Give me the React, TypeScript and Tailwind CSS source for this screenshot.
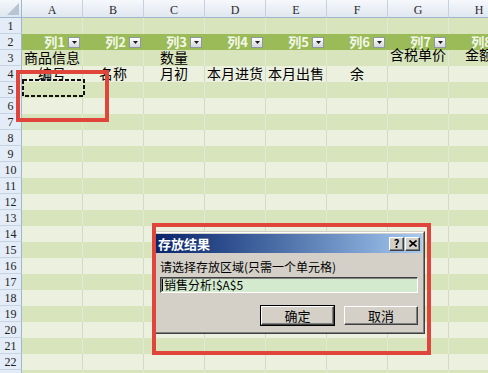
import React from "react";

const COLS = ["A", "B", "C", "D", "E", "F", "G", "H"];
const ROW_COUNT = 23;

const DATA: Record<number, Record<string, { t: string; up?: boolean }>> = {
  3: {
    A: { t: "商品信息" },
    C: { t: "数量" },
    G: { t: "含税单价", up: true },
    H: { t: "金额", up: true },
  },
  4: {
    A: { t: "编号" },
    B: { t: "名称" },
    C: { t: "月初" },
    D: { t: "本月进货" },
    E: { t: "本月出售" },
    F: { t: "余" },
  },
};

function Dropdown() {
  return (
    <span className="flex h-[11px] w-[12px] shrink-0 items-center justify-center border border-[#8f98a0] bg-gradient-to-b from-white to-[#d3d7dc]">
      <svg width="5" height="3" viewBox="0 0 5 3">
        <polygon points="0,0 5,0 2.5,3" fill="#1a1a1a" />
      </svg>
    </span>
  );
}

function TitleBtn({ children }: { children: React.ReactNode }) {
  return (
    <span className="flex h-[14px] w-[15px] items-center justify-center border border-t-white border-l-white border-r-[#404040] border-b-[#404040] bg-[#d4d0c8] shadow-[inset_-1px_-1px_#808080]">
      {children}
    </span>
  );
}

function Row({ r }: { r: number }) {
  const header = r === 2;
  const dark = r % 2 === 1;
  const bg = header ? "bg-[#9bbb59]" : dark ? "bg-[#d8e4bc]" : "bg-[#ebf1de]";
  const line = header
    ? "border-r-[#9bbb59]"
    : dark
    ? "border-r-[#e3ead3]"
    : "border-r-[#d3dbc4]";
  const data = DATA[r] || {};
  return (
    <div className="flex h-[16px]">
      <div className="flex h-[16px] w-[22px] shrink-0 items-center justify-center border-r border-b border-r-[#9eb6ce] border-b-[#c5d3e2] bg-[#e4ecf7] font-['Liberation_Serif',serif] text-[12px] leading-none text-[#222]">
        {r < ROW_COUNT ? r : ""}
      </div>
      {COLS.map((c, i) => {
        const cell = data[c];
        return (
          <div
            key={c}
            className={`flex h-[16px] w-[61px] shrink-0 items-center border-r ${bg} ${line} ${
              header ? "justify-end gap-[3px] pr-[2px]" : "justify-center"
            }`}
          >
            {header ? (
              <>
                <span className="relative z-10 whitespace-nowrap text-[13px] font-bold leading-[16px] text-[#f3f7ea]">
                  列{i + 1}
                </span>
                <Dropdown />
              </>
            ) : cell ? (
              <span
                className={`relative z-10 whitespace-nowrap text-[14px] leading-[16px] text-black ${
                  cell.up ? "-top-[4px]" : "-top-[1px]"
                }`}
              >
                {cell.t}
              </span>
            ) : null}
          </div>
        );
      })}
    </div>
  );
}

export default function App() {
  const rows = Array.from({ length: ROW_COUNT }, (_, i) => i + 1);
  return (
    <div className="relative h-[373px] w-[488px] overflow-hidden bg-white font-['Noto_Sans_CJK_SC',sans-serif]">
      {/* column header */}
      <div className="flex h-[18px]">
        <div className="relative h-[18px] w-[22px] shrink-0 border-r border-b border-r-[#9eb6ce] border-b-[#9eb6ce] bg-gradient-to-b from-[#f4f7fb] to-[#dfe6ef]">
          <svg className="absolute bottom-[2px] right-[2px]" width="12" height="12" viewBox="0 0 12 12">
            <polygon points="12,0 12,12 0,12" fill="#b7c4d3" />
          </svg>
        </div>
        {COLS.map((c) => (
          <div
            key={c}
            className="flex h-[18px] w-[61px] shrink-0 items-center justify-center border-r border-b border-r-[#c5d1de] border-b-[#9eb6ce] bg-gradient-to-b from-[#f6f8fc] to-[#e0e7f0] pt-[2px] font-['Liberation_Serif',serif] text-[12px] leading-none text-[#2a2a2a]"
          >
            {c}
          </div>
        ))}
      </div>
      {rows.map((r) => (
        <Row key={r} r={r} />
      ))}

      {/* copy marquee around A5 */}
      <svg className="absolute left-[22px] top-[79px] z-20" width="63" height="19" viewBox="0 0 63 19">
        <rect x="1" y="1" width="61" height="16" fill="none" stroke="#111" strokeWidth="2" strokeDasharray="4 2" />
      </svg>

      {/* dialog */}
      <div className="absolute left-[153px] top-[231px] z-20 h-[103px] w-[272px] border border-t-[#d4d0c8] border-l-[#d4d0c8] border-r-[#404040] border-b-[#404040] bg-[#d4d0c8]">
        <div className="flex h-full flex-col border border-t-white border-l-white border-r-[#808080] border-b-[#808080] p-px">
          <div className="flex h-[19px] shrink-0 items-center justify-between bg-gradient-to-r from-[#0a246a] to-[#a6caf0] px-[2px]">
            <span className="text-[13px] font-bold leading-none text-white">存放结果</span>
            <div className="flex gap-px">
              <TitleBtn>
                <span className="text-[11px] font-bold leading-none text-black">?</span>
              </TitleBtn>
              <TitleBtn>
                <svg width="8" height="7" viewBox="0 0 8 7">
                  <path d="M0.5 0.5 L7.5 6.5 M7.5 0.5 L0.5 6.5" stroke="#000" strokeWidth="1.6" />
                </svg>
              </TitleBtn>
            </div>
          </div>
          <div className="px-[4px] pt-[6px]">
            <div className="whitespace-nowrap text-[12px] leading-[16px] text-black">
              请选择存放区域(只需一个单元格)
            </div>
            <div className="mt-[2px] flex h-[16px] items-center border border-t-[#404040] border-l-[#404040] border-r-white border-b-white bg-[#d3eacf] pl-[1px] shadow-[inset_1px_1px_#808080]">
              <span className="mr-[1px] h-[12px] w-px bg-black" />
              <span className="whitespace-nowrap text-[12px] leading-none text-black">销售分析!$A$5</span>
            </div>
            <div className="mt-[12px] flex items-center justify-end gap-[9px]">
              <div className="h-[21px] w-[75px] border border-black">
                <div className="flex h-full w-full items-center justify-center border border-t-white border-l-white border-r-[#404040] border-b-[#404040] bg-[#d4d0c8] text-[13px] leading-none text-black shadow-[inset_-1px_-1px_#808080]">
                  确定
                </div>
              </div>
              <div className="flex h-[19px] w-[74px] items-center justify-center border border-t-white border-l-white border-r-[#404040] border-b-[#404040] bg-[#d4d0c8] text-[13px] leading-none text-black shadow-[inset_-1px_-1px_#808080]">
                取消
              </div>
            </div>
          </div>
        </div>
      </div>

      {/* red annotation boxes */}
      <div className="absolute left-[16px] top-[70px] z-30 h-[52px] w-[93px] border-[4px] border-[#e0453b]" />
      <div className="absolute left-[152px] top-[223px] z-30 h-[132px] w-[279px] border-[4px] border-[#e0453b]" />
    </div>
  );
}
